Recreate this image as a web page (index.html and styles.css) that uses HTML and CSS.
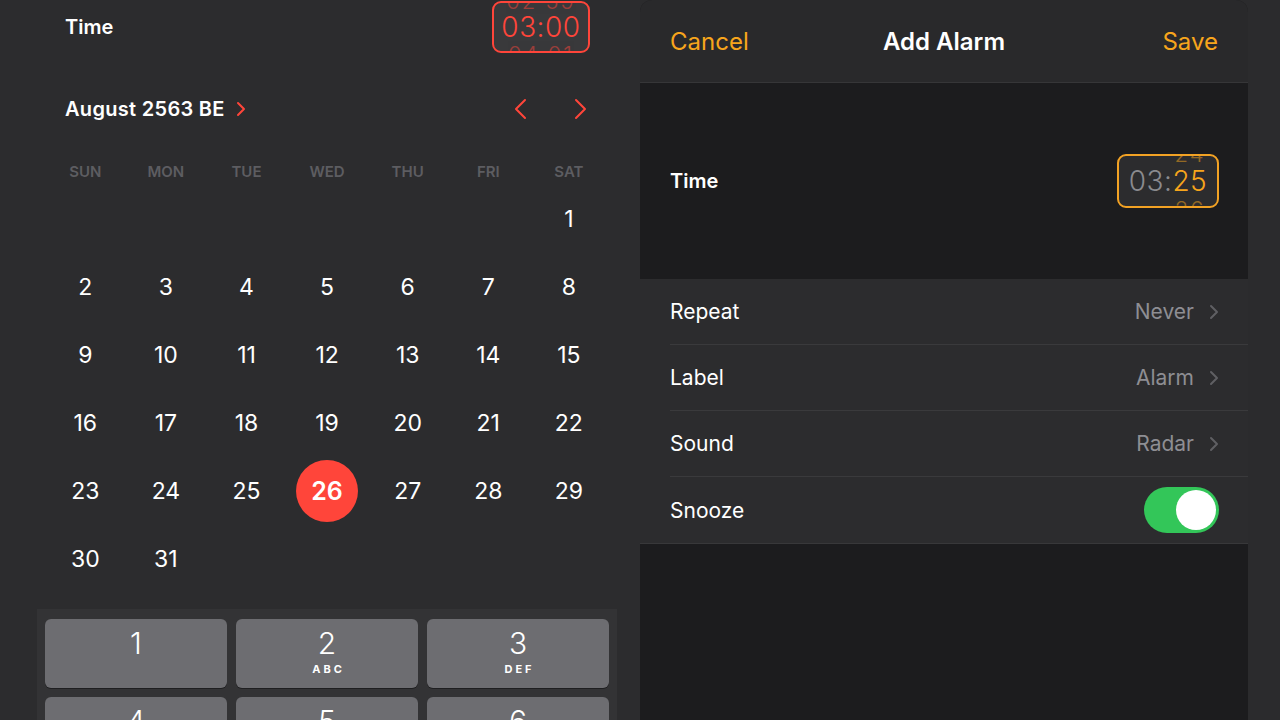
FILE: index.html
```html
<!DOCTYPE html>
<html lang="en">
<head>
  <meta charset="UTF-8">
  <meta name="viewport" content="width=device-width, initial-scale=1.0">
  <title>Add Alarm</title>
  <link rel="stylesheet" href="styles.css">
</head>
<body>

  <div class="left-pane">
    <div class="time-row">
      <span class="row-title">Time</span>
      <div class="time-box red-box">
        <span class="peek peek-top">02 59</span>
        <span class="time-value">03:00</span>
        <span class="peek peek-bottom">04 01</span>
      </div>
    </div>

    <div class="month-row">
      <div class="month-name">
        August 2563 BE
        <svg class="month-chev" width="10" height="16" viewBox="0 0 10 16"><polyline points="2,2 8,8 2,14" /></svg>
      </div>
      <div class="month-nav">
        <svg width="14" height="22" viewBox="0 0 14 22"><polyline points="12,2 3,11 12,20" /></svg>
        <svg width="14" height="22" viewBox="0 0 14 22"><polyline points="2,2 11,11 2,20" /></svg>
      </div>
    </div>

    <div class="weekdays">
      <span>SUN</span><span>MON</span><span>TUE</span><span>WED</span><span>THU</span><span>FRI</span><span>SAT</span>
    </div>

    <div class="days">
      <span></span><span></span><span></span><span></span><span></span><span></span><span>1</span>
      <span>2</span><span>3</span><span>4</span><span>5</span><span>6</span><span>7</span><span>8</span>
      <span>9</span><span>10</span><span>11</span><span>12</span><span>13</span><span>14</span><span>15</span>
      <span>16</span><span>17</span><span>18</span><span>19</span><span>20</span><span>21</span><span>22</span>
      <span>23</span><span>24</span><span>25</span><span class="selected"><b>26</b></span><span>27</span><span>28</span><span>29</span>
      <span>30</span><span>31</span>
    </div>

    <div class="keypad">
      <div class="key"><span class="digit">1</span></div>
      <div class="key"><span class="digit">2</span><span class="letters">ABC</span></div>
      <div class="key"><span class="digit">3</span><span class="letters">DEF</span></div>
      <div class="key"><span class="digit">4</span><span class="letters">GHI</span></div>
      <div class="key"><span class="digit">5</span><span class="letters">JKL</span></div>
      <div class="key"><span class="digit">6</span><span class="letters">MNO</span></div>
    </div>
  </div>

  <div class="alarm-sheet">
    <div class="sheet-header">
      <span class="link">Cancel</span>
      <span class="sheet-title">Add Alarm</span>
      <span class="link save">Save</span>
    </div>

    <div class="alarm-time">
      <span class="row-title">Time</span>
      <div class="time-box orange-box">
        <span class="peek peek-top">24</span>
        <span class="time-value"><span class="dim">03:</span>25</span>
        <span class="peek peek-bottom">26</span>
      </div>
    </div>

    <div class="settings">
      <div class="setting">
        <span>Repeat</span>
        <span class="setting-value">Never
          <svg width="10" height="16" viewBox="0 0 10 16"><polyline points="2,2 8,8 2,14" /></svg>
        </span>
      </div>
      <div class="setting">
        <span>Label</span>
        <span class="setting-value">Alarm
          <svg width="10" height="16" viewBox="0 0 10 16"><polyline points="2,2 8,8 2,14" /></svg>
        </span>
      </div>
      <div class="setting">
        <span>Sound</span>
        <span class="setting-value">Radar
          <svg width="10" height="16" viewBox="0 0 10 16"><polyline points="2,2 8,8 2,14" /></svg>
        </span>
      </div>
      <div class="setting">
        <span>Snooze</span>
        <div class="toggle"><div class="knob"></div></div>
      </div>
    </div>
  </div>

</body>
</html>
```

FILE: styles.css
```css
body {
  margin: 0;
  width: 1280px;
  height: 720px;
  overflow: hidden;
  display: flex;
  background-color: #2b2b2d;
  color: #fff;
  font-family: Inter, "Liberation Sans", sans-serif;
}

/* left: calendar */
.left-pane {
  width: 640px;
  height: 720px;
  overflow: hidden;
  background-color: #2c2c2e;
}

.time-row {
  height: 54px;
  display: flex;
  justify-content: space-between;
  align-items: center;
  padding: 0 50px 0 65px;
}

.row-title {
  font-size: 20px;
  font-weight: 600;
}

.time-box {
  position: relative;
  overflow: hidden;
  box-sizing: border-box;
  display: flex;
  align-items: center;
  justify-content: center;
  border-radius: 9px;
  background-color: #39393b;
}

.red-box {
  width: 98px;
  height: 52px;
  border: 2px solid #ff453a;
  color: #ff453a;
}

.time-value {
  font-size: 28px;
  font-weight: 300;
  letter-spacing: 0.5px;
}

.peek {
  position: absolute;
  left: 0;
  right: 0;
  text-align: center;
  font-size: 22px;
  font-weight: 300;
  line-height: 26px;
  opacity: 0.5;
  letter-spacing: 2px;
}

.peek-top {
  top: -15px;
}

.peek-bottom {
  bottom: -16px;
}

.month-row {
  height: 40px;
  margin-top: 35px;
  display: flex;
  justify-content: space-between;
  align-items: center;
  padding: 0 50px 0 65px;
}

.month-name {
  font-size: 20px;
  font-weight: 600;
  letter-spacing: 0.3px;
  display: flex;
  align-items: center;
  gap: 11px;
}

.month-name svg polyline,
.month-nav svg polyline {
  fill: none;
  stroke: #ff453a;
  stroke-width: 2;
  stroke-linecap: round;
  stroke-linejoin: round;
}

.month-nav {
  display: flex;
  gap: 47px;
  margin-right: 2px;
}

.weekdays,
.days {
  display: grid;
  grid-template-columns: repeat(7, 80.6px);
  margin-left: 45px;
  text-align: center;
}

.weekdays {
  height: 20px;
  line-height: 20px;
  margin-top: 33px;
  margin-bottom: 3px;
  font-size: 15px;
  font-weight: 600;
  color: #5d5d61;
}

.days {
  grid-auto-rows: 68px;
  font-size: 23px;
  font-weight: 400;
}

.days span {
  display: flex;
  align-items: center;
  justify-content: center;
}

.days .selected b {
  width: 62px;
  height: 62px;
  border-radius: 50%;
  background-color: #ff453a;
  display: flex;
  align-items: center;
  justify-content: center;
  font-size: 25px;
  font-weight: 600;
}

.keypad {
  margin: 16px 23px 0 37px;
  padding: 10px 8px 0 8px;
  height: 111px;
  overflow: hidden;
  background-color: #333335;
  display: grid;
  grid-template-columns: repeat(3, 1fr);
  grid-auto-rows: 69px;
  gap: 9px;
}

.key {
  background-color: #6d6d71;
  border-radius: 6px;
  display: flex;
  flex-direction: column;
  align-items: center;
  padding-top: 6px;
  box-sizing: border-box;
  box-shadow: 0 1px 0 #1f1f21;
}

.digit {
  font-size: 30px;
  font-weight: 300;
  line-height: 36px;
}

.letters {
  font-size: 11px;
  font-weight: 700;
  letter-spacing: 3px;
  margin-top: 1px;
  padding-left: 3px;
}

/* right: add alarm sheet */
.alarm-sheet {
  width: 608px;
  background-color: #1c1c1e;
  border-radius: 12px 12px 0 0;
  overflow: hidden;
}

.sheet-header {
  height: 82px;
  background-color: #29292b;
  border-bottom: 1px solid #363638;
  display: grid;
  grid-template-columns: 1fr auto 1fr;
  align-items: center;
  padding: 0 30px;
  font-size: 24px;
}

.link {
  color: #f7a51c;
}

.save {
  justify-self: end;
}

.sheet-title {
  font-weight: 600;
}

.alarm-time {
  height: 196px;
  display: flex;
  justify-content: space-between;
  align-items: center;
  padding: 0 29px 0 30px;
}

.orange-box {
  width: 102px;
  height: 54px;
  border: 2px solid #f2a224;
  background-color: #2c2c2e;
  color: #f7a51c;
}

.orange-box .dim {
  color: #8a8a8e;
}

.orange-box .peek {
  padding-left: 44px;
  box-sizing: border-box;
}

.settings {
  background-color: #2c2c2e;
  border-bottom: 1px solid #38383a;
}

.setting {
  height: 66px;
  margin-left: 30px;
  padding-right: 29px;
  display: flex;
  justify-content: space-between;
  align-items: center;
  font-size: 21px;
  border-bottom: 1px solid #3a3a3c;
  box-sizing: border-box;
}

.setting:last-child {
  border-bottom: none;
}

.setting-value {
  color: #8e8e93;
  display: flex;
  align-items: center;
  gap: 15px;
}

.setting-value svg polyline {
  fill: none;
  stroke: #5f5f63;
  stroke-width: 2;
  stroke-linecap: round;
  stroke-linejoin: round;
}

.toggle {
  width: 75px;
  height: 46px;
  border-radius: 23px;
  background-color: #33c659;
  display: flex;
  justify-content: flex-end;
  align-items: center;
  padding: 0 3px;
  box-sizing: border-box;
}

.knob {
  width: 40px;
  height: 40px;
  border-radius: 50%;
  background-color: #fff;
}
```
